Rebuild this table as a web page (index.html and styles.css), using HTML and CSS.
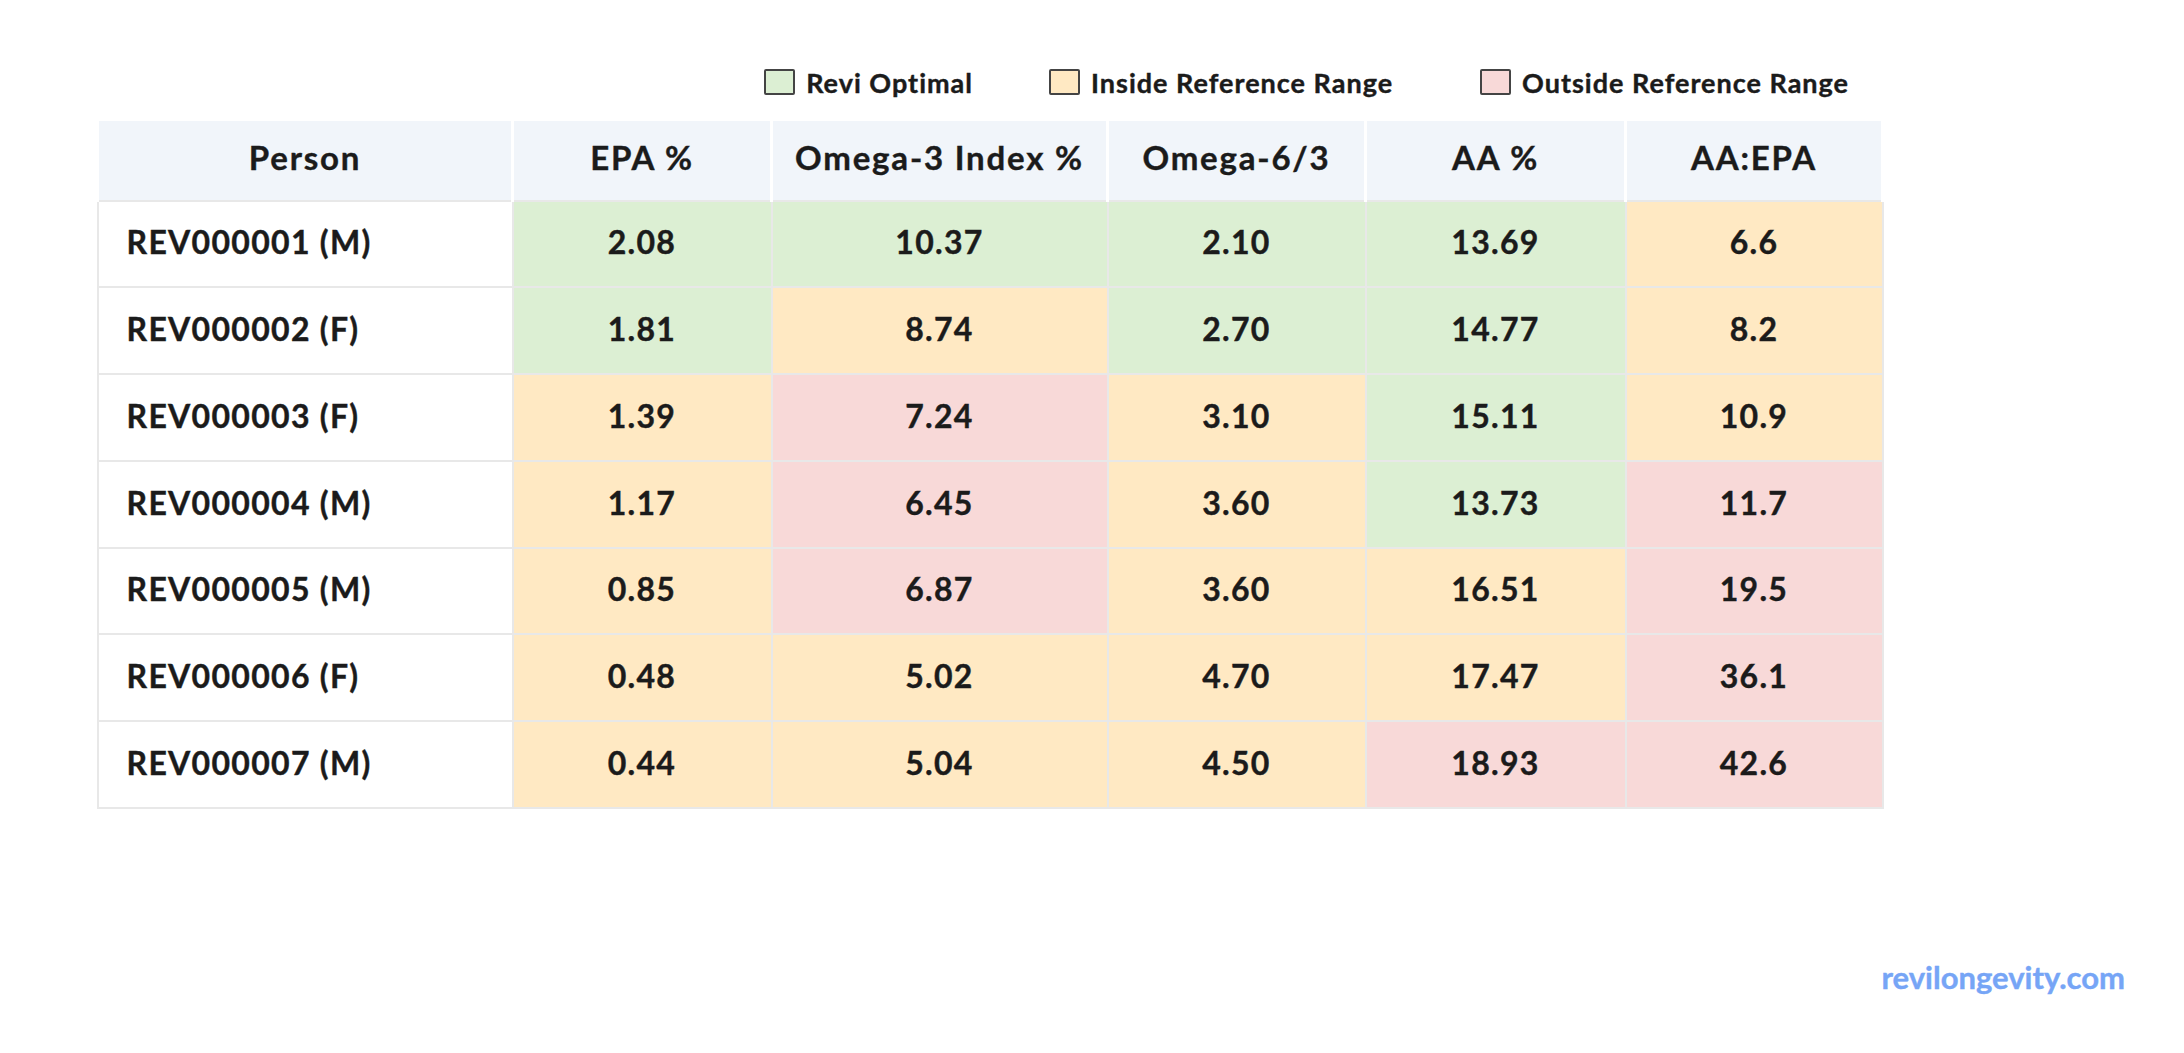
FILE: index.html
```html
<!DOCTYPE html>
<html lang="en">
<head>
<meta charset="utf-8">
<title>Omega-3 profile</title>
<link rel="stylesheet" href="styles.css">
</head>
<body>
<div class="page">
  <div class="content">
    <div class="legend">
      <div class="legend-item legend-first"><span class="swatch swatch-green"></span><span>Revi Optimal</span></div>
      <div class="legend-item legend-second"><span class="swatch swatch-yellow"></span><span>Inside Reference Range</span></div>
      <div class="legend-item"><span class="swatch swatch-pink"></span><span>Outside Reference Range</span></div>
    </div>
    <table class="grid">
      <colgroup>
        <col class="c-person"><col class="c-epa"><col class="c-o3"><col class="c-o6"><col class="c-aa"><col class="c-ratio">
      </colgroup>
      <thead>
        <tr><th>Person</th><th>EPA %</th><th>Omega-3 Index %</th><th>Omega-6/3</th><th>AA %</th><th>AA:EPA</th></tr>
      </thead>
      <tbody>
        <tr><td class="person">REV000001 (M)</td><td class="g">2.08</td><td class="g">10.37</td><td class="g">2.10</td><td class="g">13.69</td><td class="y">6.6</td></tr>
        <tr><td class="person">REV000002 (F)</td><td class="g">1.81</td><td class="y">8.74</td><td class="g">2.70</td><td class="g">14.77</td><td class="y">8.2</td></tr>
        <tr><td class="person">REV000003 (F)</td><td class="y">1.39</td><td class="p">7.24</td><td class="y">3.10</td><td class="g">15.11</td><td class="y">10.9</td></tr>
        <tr><td class="person">REV000004 (M)</td><td class="y">1.17</td><td class="p">6.45</td><td class="y">3.60</td><td class="g">13.73</td><td class="p">11.7</td></tr>
        <tr><td class="person">REV000005 (M)</td><td class="y">0.85</td><td class="p">6.87</td><td class="y">3.60</td><td class="y">16.51</td><td class="p">19.5</td></tr>
        <tr><td class="person">REV000006 (F)</td><td class="y">0.48</td><td class="y">5.02</td><td class="y">4.70</td><td class="y">17.47</td><td class="p">36.1</td></tr>
        <tr><td class="person">REV000007 (M)</td><td class="y">0.44</td><td class="y">5.04</td><td class="y">4.50</td><td class="p">18.93</td><td class="p">42.6</td></tr>
      </tbody>
    </table>
  </div>
  <div class="brand">revilongevity.com</div>
</div>
</body>
</html>
```

FILE: styles.css
```css
html, body {
  margin: 0;
  padding: 0;
  background: #ffffff;
}

body {
  font-family: Lato, "Noto Sans", "DejaVu Sans", sans-serif;
  font-weight: 700;
  color: #1b1b1b;
  -webkit-text-stroke: 0.4px currentColor;
}

.page {
  box-sizing: border-box;
  min-height: 1053px;
  display: flex;
  flex-direction: column;
  padding: 66px 59px 57px 96px;
}

.content {
  width: 1785px;
}

.legend {
  display: flex;
  justify-content: flex-end;
  align-items: center;
  height: 32px;
  padding-right: 32px;
  margin-bottom: 20px;
  font-size: 27px;
  letter-spacing: 1px;
}

.legend-item {
  display: flex;
  align-items: center;
  gap: 11px;
}

.legend-first { margin-right: 76px; }
.legend-second { margin-right: 87px; }

.swatch {
  display: block;
  box-sizing: border-box;
  width: 31px;
  height: 26px;
  border: 2px solid #444444;
  border-radius: 2px;
}

.swatch-green { background: #dcefd3; }
.swatch-yellow { background: #ffe9c3; }
.swatch-pink { background: #f8d9d8; }

.grid {
  width: 1785px;
  table-layout: fixed;
  border-collapse: collapse;
}

.c-person { width: 415px; }
.c-epa { width: 259px; }
.c-o3 { width: 336px; }
.c-o6 { width: 258px; }
.c-aa { width: 260px; }
.c-ratio { width: 257px; }

.grid th {
  height: 72.5px;
  padding: 0 0 6px 0;
  background: #f1f5fa;
  border: 3px solid #ffffff;
  border-bottom: none;
  font-size: 33px;
  font-weight: 700;
  letter-spacing: 1.8px;
  text-align: center;
  vertical-align: middle;
}

.grid td {
  height: 80.75px;
  padding: 0 0 4px 0;
  border: 2px solid #e8e8e8;
  font-size: 32px;
  letter-spacing: 1.3px;
  text-align: center;
  vertical-align: middle;
}

.grid td.person {
  text-align: left;
  padding-left: 28px;
  background: #ffffff;
}

.grid td.g { background: #dcefd3; }
.grid td.y { background: #ffe9c3; }
.grid td.p { background: #f8d9d8; }

.brand {
  margin-top: auto;
  align-self: flex-end;
  font-size: 31px;
  color: #76a5f6;
}
```
